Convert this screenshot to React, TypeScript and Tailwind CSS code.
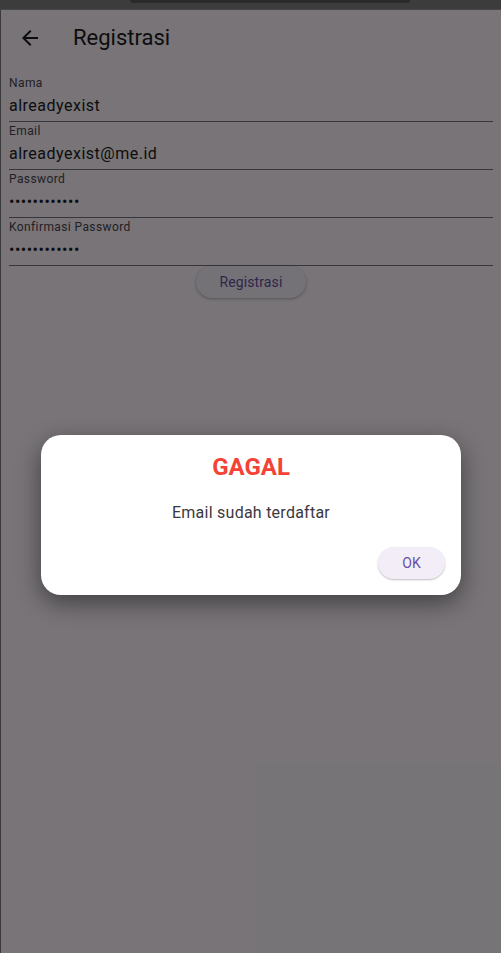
const fields = [
  { label: 'Nama', value: 'alreadyexist' },
  { label: 'Email', value: 'alreadyexist@me.id' },
  { label: 'Password', value: '••••••••••••' },
  { label: 'Konfirmasi Password', value: '••••••••••••' },
];

export default function App() {
  return (
    <div className="w-[501px] h-[953px] flex flex-col overflow-hidden bg-[#3c3c3c] font-['Roboto',sans-serif]">
      {/* Emulator top strip */}
      <div className="h-[10px] shrink-0 px-[130px] border-b border-[#474747]">
        <div className="h-[3px] w-[280px] rounded-b-md bg-[#2a2a2a]" />
      </div>

      <div className="flex-1 flex">
        <div className="w-px bg-[#3a3a3a]" />

        <div className="relative flex-1">
          {/* Page */}
          <div className="absolute inset-0 bg-[#fef7ff] flex flex-col">
            <header className="h-[56px] flex items-center pl-[17px] text-[#1d1b20]">
              <svg viewBox="0 0 24 24" className="w-6 h-6" fill="currentColor">
                <path d="M20 11H7.83l5.59-5.59L12 4l-8 8 8 8 1.41-1.41L7.83 13H20v-2z" />
              </svg>
              <h1 className="ml-[31px] text-[22px] leading-7">Registrasi</h1>
            </header>

            <div className="mt-[8px] px-2 flex flex-col">
              {fields.map((f) => (
                <div key={f.label} className="pt-px pb-[3px] border-b border-[#79747e] flex flex-col gap-[3px]">
                  <span className="text-xs leading-4 tracking-[0.4px] text-[#49454f]">{f.label}</span>
                  <span className="text-base leading-6 tracking-[0.5px] text-[#1d1b20]">{f.value}</span>
                </div>
              ))}
            </div>

            <div className="flex justify-center">
              <button className="h-8 px-6 rounded-full bg-[#f7f2fa] text-[#6750a4] text-sm tracking-[0.1px] shadow-[0_1px_3px_rgba(0,0,0,0.3)]">
                Registrasi
              </button>
            </div>
          </div>

          {/* Barrier */}
          <div className="absolute inset-0 bg-black/[0.53]" />

          {/* Dialog */}
          <div className="absolute left-[40px] top-[425px] w-[420px] rounded-[20px] bg-white px-4 pt-4 pb-4 shadow-[0_8px_24px_rgba(0,0,0,0.45)] flex flex-col">
            <h2 className="text-center text-2xl leading-8 font-bold text-[#f44336]">GAGAL</h2>
            <p className="mt-[18px] text-center text-base leading-6 tracking-[0.25px] text-[#3b383e]">Email sudah terdaftar</p>
            <div className="mt-[22px] flex justify-end">
              <button className="h-8 w-[67px] rounded-full bg-[#f3edf7] text-[#6750a4] text-sm tracking-[0.1px] shadow-[0_1px_2px_rgba(0,0,0,0.25)]">
                OK
              </button>
            </div>
          </div>
        </div>
      </div>
    </div>
  );
}
